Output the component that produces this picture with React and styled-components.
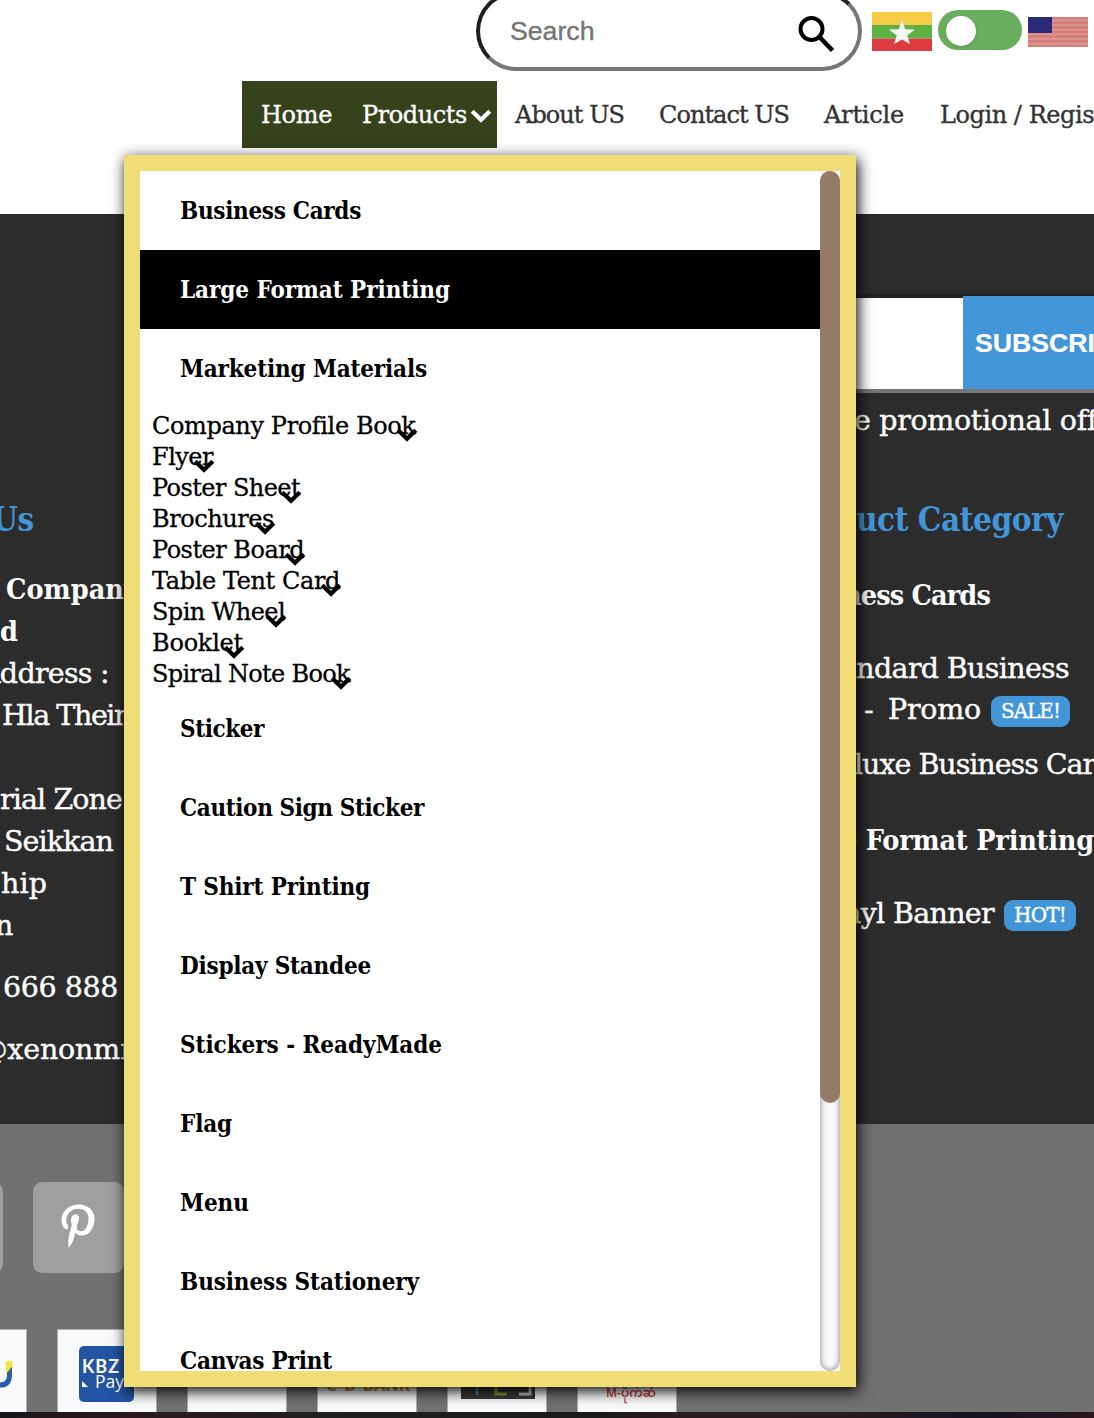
import React, { useLayoutEffect, useRef, useState } from "react";
import styled, { createGlobalStyle, css } from "styled-components";
import { FaPinterestP } from "react-icons/fa6";

const GlobalStyle = createGlobalStyle`
  * { box-sizing: border-box; }
  body { margin: 0; background: #fff; overflow: hidden; }
`;

const serif = `"DejaVu Serif", serif`;
const serifBold = `"DejaVu Serif Condensed", "DejaVu Serif", serif`;
const sans = `"Liberation Sans", Arial, sans-serif`;

const bold = css`
  font-family: ${serifBold};
  font-stretch: condensed;
  font-weight: 700;
  -webkit-text-stroke: 0;
`;

const Page = styled.div`
  position: relative;
  width: 1094px;
  height: 1418px;
  overflow: hidden;
  display: flex;
  flex-direction: column;
  font-family: ${serif};
  white-space: nowrap;
`;

/* Text whose tracking is computed so the run fills a known width. */
const Run = styled.span`
  display: inline-block;
  white-space: pre;
`;

function Fit({ width, children }) {
  const ref = useRef(null);
  const [tracking, setTracking] = useState(0);
  useLayoutEffect(() => {
    const natural = ref.current.getBoundingClientRect().width;
    setTracking((width - natural) / children.length);
  }, [width, children]);
  return (
    <Run ref={ref} style={{ letterSpacing: `${tracking}px` }}>
      {children}
    </Run>
  );
}

function Chevron({ color = "#000" }) {
  return (
    <svg width="22" height="14" viewBox="0 0 22 14" fill="none">
      <path d="M2.2 2.2 L11 10.8 L19.8 2.2" stroke={color} strokeWidth="4.2" />
    </svg>
  );
}

/* ---------- header ---------- */
const Header = styled.header`
  height: 214px;
  flex: none;
  display: flex;
  flex-direction: column;
`;
const Tools = styled.div`
  display: flex;
  align-items: flex-start;
  height: 81px;
  padding-left: 476px;
`;
const SearchBox = styled.div`
  display: flex;
  align-items: center;
  justify-content: space-between;
  width: 386px;
  height: 80px;
  margin-top: -9px;
  padding: 0 23px 0 30px;
  border: 4px solid;
  border-color: #1f1f1f #767676 #767676 #1f1f1f;
  border-radius: 40px;
  font: 26.67px ${sans};
  color: #757575;
  -webkit-text-stroke: 0.4px #757575;
  svg { margin-top: 5px; }
`;
const FlagSlot = styled.div`
  display: flex;
  margin: ${(p) => p.$top}px 0 0 ${(p) => p.$gap}px;
`;
const Toggle = styled.div`
  width: 84px;
  height: 40px;
  margin: 10px 0 0 6px;
  padding: 6px 8px;
  border-radius: 20px;
  background: #68ae5c;
`;
const Knob = styled.div`
  width: 30px;
  height: 30px;
  border-radius: 50%;
  background: #fff;
  box-shadow: 0 1px 3px rgba(0, 0, 0, 0.15);
`;
const Nav = styled.nav`
  display: flex;
  height: 67px;
  padding-left: 242px;
  font-size: 24px;
  color: #333;
  -webkit-text-stroke: 0.35px;
`;
const NavItem = styled.a`
  display: flex;
  align-items: center;
  flex: none;
  padding-left: ${(p) => p.$pad}px;
  ${(p) =>
    p.$active &&
    css`
      background: #35421b;
      color: #fff;
    `}
  svg { margin: 3px 5px 0 3px; }
`;

/* ---------- footer ---------- */
const Footer = styled.footer`
  display: flex;
  flex: none;
  height: 910px;
  background: #2c2c2c;
  color: #fff;
  font-size: 28.5px;
  -webkit-text-stroke: 0.4px;
`;
const AddressColumn = styled.div`
  flex: none;
  width: 840px;
  padding-top: 281px;
`;
const ShopColumn = styled.div`
  flex: 1;
  min-width: 0;
  padding-top: 80px;
  overflow: hidden;
`;
const Line = styled.div`
  display: flex;
  align-items: center;
  height: ${(p) => p.$h || 42}px;
  margin-top: ${(p) => p.$gap || 0}px;
  margin-left: ${(p) => p.$x || 0}px;
  ${(p) => p.$bold && bold}
`;
const Heading = styled(Line)`
  color: #4295d7;
  font-size: 33px;
  ${bold}
`;
const Badge = styled.span`
  display: flex;
  align-items: center;
  justify-content: center;
  width: ${(p) => p.$w}px;
  height: 31px;
  margin: 5px 0 0 10px;
  padding-bottom: 1px;
  border-radius: 9px;
  background: #4295d7;
  font-size: 20px;
`;
const Subscribe = styled.div`
  display: flex;
  height: 99px;
`;
const EmailField = styled.div`
  width: 123px;
  flex: none;
  background: #fff;
  border-top: 4px solid #212121;
  border-bottom: 4px solid #767676;
`;
const SubscribeSide = styled.div`
  flex: 1;
  border-top: 2px solid #212121;
  border-bottom: 4px solid #767676;
  background: #4295d7;
`;
const SubscribeButton = styled.div`
  display: flex;
  align-items: center;
  height: 94px;
  padding-left: 12px;
  font: bold 26.67px ${sans};
  -webkit-text-stroke: 0.2px;
`;

/* ---------- social and payments ---------- */
const Bottom = styled.section`
  flex: none;
  height: 288px;
  padding-top: 58px;
  background: #717171;
`;
const SocialRow = styled.div`
  display: flex;
  gap: 30px;
  margin-left: -88px;
`;
const SocialButton = styled.div`
  display: flex;
  align-items: center;
  justify-content: center;
  width: 91px;
  height: 91px;
  padding: 0 2px 3px 0;
  border-radius: 9px;
  background: #9f9f9f;
  color: #fff;
`;
const PaymentRow = styled.div`
  display: flex;
  gap: 30px;
  margin: 56px 0 0 -73px;
`;
const PaymentCard = styled.div`
  width: 100px;
  height: 83px;
  flex: none;
  display: flex;
  flex-direction: column;
  align-items: flex-start;
  padding: ${(p) => p.$pad || "0"};
  border: 1px solid #b5aeae;
  border-bottom: 0;
  background: #f8fafb;
  overflow: hidden;
`;
const KbzLogo = styled.div`
  display: flex;
  flex-direction: column;
  align-items: flex-start;
  width: 55px;
  height: 56px;
  padding: 12px 0 0 3px;
  border-radius: 5px;
  background: #2354a4;
  color: #fff;
  font: 700 18px/16px Lato, sans-serif;
`;
const KbzPay = styled.div`
  display: flex;
  align-items: center;
  gap: 7px;
  height: 15px;
  font: 400 17.5px/15px "Open Sans", sans-serif;
  svg { margin-top: 5px; }
`;
const BankName = styled.div`
  color: #c18a36;
  font: 700 17px/20px "Open Sans", sans-serif;
  word-spacing: 3px;
`;
const YesSign = styled.div`
  display: flex;
  width: 74px;
  height: 42px;
  background: #3b3737;
`;
const MobileMoney = styled.div`
  color: #c63a36;
  font: 600 12px/20px "Open Sans", "Noto Sans Myanmar", "Padauk", sans-serif;
`;
const Strip = styled.div`
  height: 6px;
  flex: none;
  background: linear-gradient(90deg, #17151a, #2b1a20 12%, #211f20 30%, #1b1a1b 55%, #2a1b20 62%, #231a20 80%, #15121f 90%, #2a161e);
`;

/* ---------- products menu ---------- */
const Menu = styled.div`
  position: absolute;
  left: 124px;
  top: 155px;
  display: flex;
  width: 732px;
  height: 1232px;
  border: 16px solid #f0dd75;
  background: #fff;
  color: #000;
  box-shadow: 2px 4px 14px #000;
`;
const MenuList = styled.div`
  flex: 1;
  overflow: hidden;
  font-size: 24px;
`;
const MenuItem = styled.div`
  display: flex;
  align-items: center;
  height: 79px;
  padding: 0 0 1px 40px;
  ${bold}
  background: ${(p) => (p.$active ? "#000" : "#fff")};
  color: ${(p) => (p.$active ? "#fff" : "#000")};
`;
const SubList = styled.div`
  padding: 2px 0 0 12px;
  -webkit-text-stroke: 0.3px;
`;
const SubItem = styled.div`
  display: flex;
  align-items: center;
  height: 31px;
  svg { margin: 18px 0 0 -20px; flex: none; }
`;
const ScrollTrack = styled.div`
  width: 20px;
  border-radius: 10px;
  background: #fafafa;
  box-shadow: inset 0 0 6px rgba(0, 0, 0, 0.5);
`;
const ScrollThumb = styled.div`
  height: 932px;
  border-radius: 10px;
  background: #937a69;
`;

const subItems = [
  ["Company Profile Book", 263],
  ["Flyer", 61],
  ["Poster Sheet", 148],
  ["Brochures", 122],
  ["Poster Board", 152],
  ["Table Tent Card", 188],
  ["Spin Wheel", 133],
  ["Booklet", 91],
  ["Spiral Note Book", 198],
];

const menuItems = [
  ["Business Cards", 181],
  ["Large Format Printing", 270],
  ["Marketing Materials", 247],
  ["Sticker", 84],
  ["Caution Sign Sticker", 244],
  ["T Shirt Printing", 190],
  ["Display Standee", 191],
  ["Stickers - ReadyMade", 262],
  ["Flag", 52],
  ["Menu", 69],
  ["Business Stationery", 239],
  ["Canvas Print", 152],
];

export default function App() {
  return (
    <Page>
      <GlobalStyle />
      <Header>
        <Tools>
          <SearchBox>
            Search
            <svg width="38" height="38" viewBox="0 0 38 38" fill="none" stroke="#000">
              <circle cx="14.5" cy="14" r="11" strokeWidth="4" />
              <path d="M22.5 22 L35.5 35.5" strokeWidth="4.6" />
            </svg>
          </SearchBox>
          <FlagSlot $top={12} $gap={10}>
            <svg width="60" height="39" viewBox="0 0 60 39">
              <rect width="60" height="13" fill="#f6cc46" />
              <rect y="13" width="60" height="13.5" fill="#5db145" />
              <rect y="26.5" width="60" height="12.5" fill="#dc3c40" />
              <path d="M30 8 L33.2 17.3 L43 17.5 L35.2 23.4 L38 32 L30 27.4 L22 32 L24.8 23.4 L17 17.5 L26.8 17.3 Z" fill="#fff" opacity=".92" />
            </svg>
          </FlagSlot>
          <Toggle>
            <Knob />
          </Toggle>
          <FlagSlot $top={17} $gap={6}>
            <svg width="60" height="30" viewBox="0 0 60 30">
              <rect width="60" height="30" fill="#dd9491" />
              {[0, 4.6, 9.2, 13.8, 18.4, 23, 27.7].map((y) => (
                <rect key={y} y={y} width="60" height="2.3" fill="#d57b78" />
              ))}
              <rect width="24" height="16" fill="#2b2a78" />
            </svg>
          </FlagSlot>
        </Tools>
        <Nav>
          <NavItem $active $pad={19}><Fit width={71}>Home</Fit></NavItem>
          <NavItem $active $pad={30}>
            <Fit width={105}>Products</Fit>
            <Chevron color="#fff" />
          </NavItem>
          <NavItem $pad={18}><Fit width={109}>About US</Fit></NavItem>
          <NavItem $pad={35}><Fit width={130}>Contact US</Fit></NavItem>
          <NavItem $pad={35}><Fit width={80}>Article</Fit></NavItem>
          <NavItem $pad={36}><Fit width={188}>Login / Register</Fit></NavItem>
        </Nav>
      </Header>

      <Footer>
        <AddressColumn>
          <Heading $x={-8} $h={48}><Fit width={42}>Us</Fit></Heading>
          <Line $bold $gap={25} $x={6}><Fit width={133}>Company</Fit></Line>
          <Line $bold $x={0}>d</Line>
          <Line $x={-20}><Fit width={129}>Address :</Fit></Line>
          <Line $x={2}><Fit width={129}>Hla Thein</Fit></Line>
          <Line />
          <Line><Fit width={122}>rial Zone</Fit></Line>
          <Line $x={4}><Fit width={109}>Seikkan</Fit></Line>
          <Line $x={1}><Fit width={46}>hip</Fit></Line>
          <Line $x={-5}>n</Line>
          <Line $gap={20} $x={3}><Fit width={115}>666 888</Fit></Line>
          <Line $gap={20} $x={-21}><Fit width={168}>@xenonmm</Fit></Line>
        </AddressColumn>
        <ShopColumn>
          <Subscribe>
            <EmailField />
            <SubscribeSide>
              <SubscribeButton>SUBSCRIBE</SubscribeButton>
            </SubscribeSide>
          </Subscribe>
          <Line $gap={6} $x={14}>
            <Fit width={197}>e promotional</Fit>
            <Fit width={90}> offers</Fit>
          </Line>
          <Heading $gap={54} $x={16} $h={48}><Fit width={207}>uct Category</Fit></Heading>
          <Line $bold $gap={31} $x={3}><Fit width={147}>ness Cards</Fit></Line>
          <Line $gap={31} $x={0}><Fit width={229}>andard Business</Fit></Line>
          <Line $h={40} $x={24}>
            <Fit width={24}>- </Fit>
            <Fit width={93}>Promo</Fit>
            <Badge $w={79}><Fit width={59}>SALE!</Fit></Badge>
          </Line>
          <Line $gap={14} $x={14}><Fit width={272}>luxe Business Cards</Fit></Line>
          <Line $bold $gap={34} $x={1}><Fit width={253}>e Format Printing</Fit></Line>
          <Line $gap={31} $x={3}>
            <Fit width={151}>nyl Banner</Fit>
            <Badge $w={72}><Fit width={52}>HOT!</Fit></Badge>
          </Line>
        </ShopColumn>
      </Footer>

      <Bottom>
        <SocialRow>
          <SocialButton />
          <SocialButton><FaPinterestP size={44} /></SocialButton>
        </SocialRow>
        <PaymentRow>
          <PaymentCard $pad="30px 0 0 60px">
            <svg width="26" height="30" viewBox="0 0 26 30" fill="none">
              <path d="M4 2 V18 Q4 25 12 25 Q21 25 21.5 16 V2" stroke="#2a5caa" strokeWidth="5" />
              <path d="M18 1 H24.5 V6 L18 14 Z" fill="#fbe437" />
            </svg>
          </PaymentCard>
          <PaymentCard $pad="16px 0 0 21px">
            <KbzLogo>
              <Fit width={38}>KBZ</Fit>
              <KbzPay>
                <svg width="6" height="6" viewBox="0 0 6 6"><path d="M0 0 L6 6 H0 Z" fill="#fff" /></svg>
                Pay
              </KbzPay>
            </KbzLogo>
          </PaymentCard>
          <PaymentCard />
          <PaymentCard $pad="45px 0 0 8px">
            <BankName><Fit width={84}>C B BANK</Fit></BankName>
          </PaymentCard>
          <PaymentCard $pad="27px 0 0 13px">
            <YesSign>
              <svg width="74" height="42" viewBox="0 0 74 42" fill="none" strokeWidth="3">
                <path d="M16 18 V38" stroke="#3e83a8" />
                <path d="M46 18 H35 V37 H46" stroke="#7fa13c" />
                <path d="M59 27 H69 V37 H58" stroke="#c8c8c8" />
              </svg>
            </YesSign>
          </PaymentCard>
          <PaymentCard $pad="53px 0 0 28px">
            <MobileMoney>M-ပိုက်ဆံ</MobileMoney>
          </PaymentCard>
        </PaymentRow>
      </Bottom>
      <Strip />

      <Menu>
        <MenuList>
          {menuItems.map(([label, width], i) => (
            <React.Fragment key={label}>
              <MenuItem $active={i === 1}><Fit width={width}>{label}</Fit></MenuItem>
              {i === 2 && (
                <SubList>
                  {subItems.map(([sub, w]) => (
                    <SubItem key={sub}>
                      <Fit width={w}>{sub}</Fit>
                      <Chevron />
                    </SubItem>
                  ))}
                </SubList>
              )}
            </React.Fragment>
          ))}
        </MenuList>
        <ScrollTrack>
          <ScrollThumb />
        </ScrollTrack>
      </Menu>
    </Page>
  );
}
